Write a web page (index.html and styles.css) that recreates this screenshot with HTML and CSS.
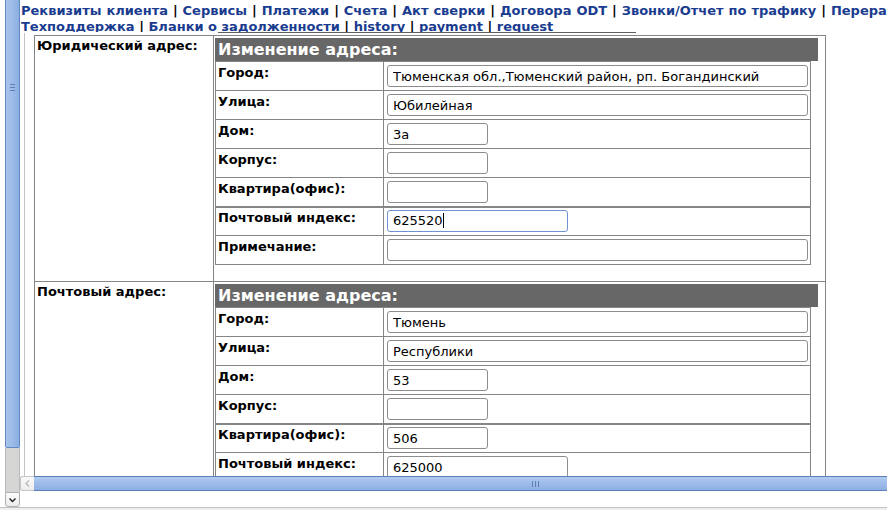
FILE: index.html
```html
<!DOCTYPE html>
<html lang="ru">
<head>
<meta charset="utf-8">
<title>Изменение адреса</title>
<link rel="stylesheet" href="styles.css">
</head>
<body>
<div class="window">
  <div class="vbar">
    <div class="vthumb">
      <svg class="vgrip" width="5" height="7" viewBox="0 0 5 7"><path d="M0 0.5H5M0 3.5H5M0 6.5H5" stroke="#5f7fae" stroke-width="1"/></svg>
    </div>
    <div class="vtrack"></div>
    <div class="vbtn">
      <svg width="13" height="13" viewBox="0 0 13 13"><path d="M3.5 5.5L6.5 8.5L9.5 5.5" fill="none" stroke="#222" stroke-width="1.4"/></svg>
    </div>
  </div>

  <div class="main">
    <div class="nav">
      <div class="navrow wide"><a href="#">Реквизиты клиента</a> | <a href="#">Сервисы</a> | <a href="#">Платежи</a> | <a href="#">Счета</a> | <a href="#">Акт сверки</a> | <a href="#">Договора ODT</a> | <a href="#">Звонки/Отчет по трафику</a> | <a href="#">Перерасчет</a></div>
      <div class="navrow"><a href="#">Техподдержка</a> | <a href="#">Бланки о задолженности</a> | <a href="#">history</a> | <a href="#">payment</a> | <a href="#">request</a></div>
    </div>
    <div class="navline"></div>

    <div class="frame">
      <div class="outer">
        <div class="olabel">Юридический адрес:</div>
        <div class="ocell first">
          <div class="ahead">Изменение адреса:</div>
          <div class="form">
            <div class="fl">Город:</div>
            <div class="fi"><input class="inp w-lg" type="text" value="Тюменская обл.,Тюменский район, рп. Богандинский"></div>
            <div class="fl">Улица:</div>
            <div class="fi"><input class="inp w-lg" type="text" value="Юбилейная"></div>
            <div class="fl">Дом:</div>
            <div class="fi"><input class="inp w-sm" type="text" value="3а"></div>
            <div class="fl">Корпус:</div>
            <div class="fi"><input class="inp w-sm" type="text" value=""></div>
            <div class="fl">Квартира(офис):</div>
            <div class="fi"><input class="inp w-sm" type="text" value=""></div>
            <div class="fl brk">Почтовый индекс:</div>
            <div class="fi brk"><div class="inp w-md focus">625520<span class="caret"></span></div></div>
            <div class="fl">Примечание:</div>
            <div class="fi"><input class="inp w-lg" type="text" value=""></div>
          </div>
        </div>

        <div class="olabel">Почтовый адрес:</div>
        <div class="ocell">
          <div class="ahead">Изменение адреса:</div>
          <div class="form">
            <div class="fl">Город:</div>
            <div class="fi"><input class="inp w-lg" type="text" value="Тюмень"></div>
            <div class="fl">Улица:</div>
            <div class="fi"><input class="inp w-lg" type="text" value="Республики"></div>
            <div class="fl">Дом:</div>
            <div class="fi"><input class="inp w-sm" type="text" value="53"></div>
            <div class="fl">Корпус:</div>
            <div class="fi"><input class="inp w-sm" type="text" value=""></div>
            <div class="fl brk">Квартира(офис):</div>
            <div class="fi brk"><input class="inp w-sm" type="text" value="506"></div>
            <div class="fl">Почтовый индекс:</div>
            <div class="fi"><input class="inp w-md" type="text" value="625000"></div>
            <div class="fl">Примечание:</div>
            <div class="fi"><input class="inp w-lg" type="text" value=""></div>
          </div>
        </div>
      </div>
    </div>
  </div>

  <div class="hbar">
    <div class="hbtn">
      <svg width="13" height="13" viewBox="0 0 13 13"><path d="M8 3.5L5 6.5L8 9.5" fill="none" stroke="#b8b8b8" stroke-width="1.2"/></svg>
    </div>
    <div class="hthumb">
      <svg class="hgrip" width="7" height="6" viewBox="0 0 7 6"><path d="M0.5 0V6M3.5 0V6M6.5 0V6" stroke="#5f7fae" stroke-width="1"/></svg>
    </div>
  </div>

  <div class="footer"></div>
</div>
</body>
</html>
```

FILE: styles.css
```css
* { box-sizing: border-box; }

html, body {
  margin: 0;
  padding: 0;
}

body {
  width: 887px;
  height: 510px;
  overflow: hidden;
  background: #fff;
  font-family: "DejaVu Sans", "Noto Sans", sans-serif;
}

.window {
  display: grid;
  grid-template-columns: 5px 15px 867px;
  grid-template-rows: 476px 15px 16px 3px;
  height: 510px;
}

/* vertical scrollbar (left) */
.vbar {
  grid-column: 2;
  grid-row: 1 / 4;
  display: flex;
  flex-direction: column;
}

.vthumb {
  height: 448px;
  border: 1px solid #6489c0;
  border-top: none;
  border-radius: 0 0 2px 2px;
  background: linear-gradient(to right, #a8c4ee, #9dbbe9 50%, #8aaee2);
  display: flex;
  justify-content: center;
  padding-top: 84px;
}

.vgrip { display: block; }

.vtrack {
  height: 44px;
  background: #d5d5d3;
  border-left: 1px solid #b9b9b9;
  border-right: 1px solid #b9b9b9;
}

.vbtn {
  height: 15px;
  border: 1px solid #b0b0b0;
  border-radius: 0 0 3px 3px;
  background: linear-gradient(#fbfbfb, #ececec);
  display: flex;
  align-items: center;
  justify-content: center;
}

/* main page */
.main {
  grid-column: 3;
  grid-row: 1;
  overflow: hidden;
}

.nav {
  height: 32px;
  overflow: hidden;
  padding: 3px 0 0 1px;
  font: bold 13px/16px "DejaVu Sans", sans-serif;
  color: #000;
}

.navrow {
  white-space: nowrap;
}

.navrow.wide {
  word-spacing: 0.4px;
}

.nav a {
  color: #1a3c8f;
  text-decoration: none;
}

.navline {
  height: 1px;
  width: 418px;
  margin-left: 198px;
  background: #606060;
}

.frame {
  margin-left: 4px;
  border-left: 1px solid #c4c4c4;
  padding: 2px 0 0 9px;
  height: 600px;
}

.outer {
  display: grid;
  grid-template-columns: 179px 612px;
  width: max-content;
  border-top: 1px solid #868686;
  border-left: 1px solid #868686;
}

.olabel {
  border-right: 1px solid #868686;
  border-bottom: 1px solid #868686;
  padding: 2px 2px 0 2px;
  font: bold 13px/16px "DejaVu Sans", sans-serif;
  color: #000;
}

.ocell {
  border-right: 1px solid #868686;
  border-bottom: 1px solid #868686;
  padding: 2px 0 16px 1px;
}

.ahead {
  width: 603px;
  height: 23px;
  background: #676767;
  color: #fff;
  font: bold 16px/23px "DejaVu Sans", sans-serif;
  padding-left: 3px;
  white-space: nowrap;
}

.form {
  display: grid;
  grid-template-columns: 168px 427px;
  width: max-content;
  border-left: 1px solid #868686;
  border-top: 1px solid #868686;
}

.fl, .fi {
  height: 29px;
  border-right: 1px solid #868686;
  border-bottom: 1px solid #868686;
}

.fl {
  padding: 3px 3px 0 2px;
  font: bold 13px/16px "DejaVu Sans", sans-serif;
  color: #000;
  white-space: nowrap;
}

.fi {
  padding: 3px 0 0 3px;
}

.brk {
  box-shadow: inset 0 1px 0 #868686;
}

.inp {
  display: block;
  height: 22px;
  margin: 0;
  border: 1px solid #8d8d8d;
  border-radius: 3px;
  padding: 0 5px;
  background: #fff;
  color: #000;
  font: 13px/20px "DejaVu Sans", sans-serif;
  outline: none;
}

.w-lg { width: 421px; }
.w-md { width: 181px; }
.w-sm { width: 101px; }

.focus {
  border-color: #6e93d2;
  white-space: nowrap;
}

.caret {
  display: inline-block;
  width: 1px;
  height: 15px;
  background: #000;
  vertical-align: -3px;
}

/* horizontal scrollbar */
.hbar {
  grid-column: 3;
  grid-row: 2;
  display: flex;
}

.hbtn {
  width: 14px;
  border: 1px solid #c4c4c4;
  border-right: none;
  border-radius: 3px 0 0 3px;
  background: linear-gradient(#fafafa, #ededed);
  display: flex;
  align-items: center;
  justify-content: center;
}

.hthumb {
  flex: 1;
  border-top: 1px solid #5b80b7;
  border-bottom: 1px solid #5b80b7;
  background: linear-gradient(#b0cbf1, #9dbbe9 50%, #8eb0e3);
  padding: 4px 0 0 498px;
}

.hgrip { display: block; }

.footer {
  grid-column: 1 / 4;
  grid-row: 4;
  border-top: 1px solid #c2c2c2;
  background: #eeeeee;
}
```
